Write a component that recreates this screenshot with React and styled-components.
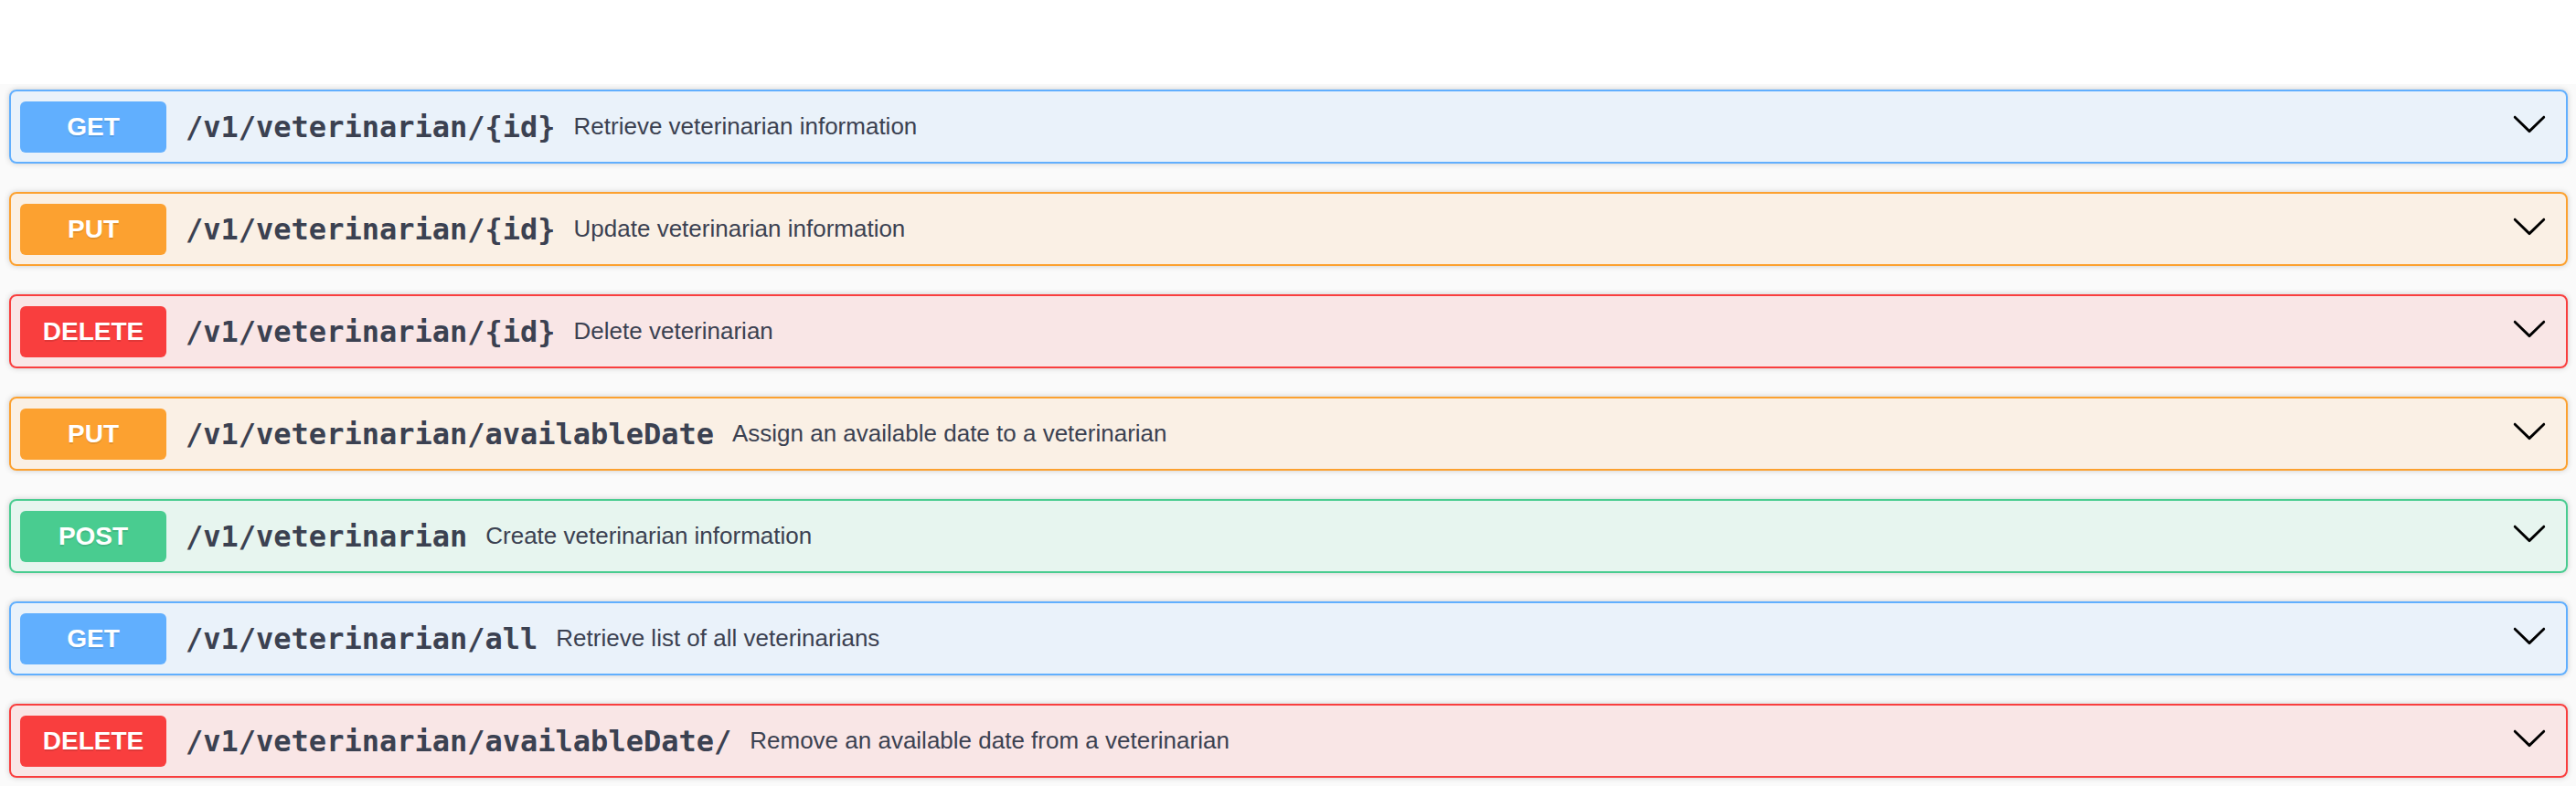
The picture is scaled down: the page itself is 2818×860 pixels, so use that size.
import React from "react";
import styled, { createGlobalStyle } from "styled-components";

const GlobalStyle = createGlobalStyle`
  html, body { margin: 0; padding: 0; }
  body {
    background: #fafafa;
    font-family: "Liberation Sans", Arial, sans-serif;
    color: #3b4151;
  }
`;

const METHODS = {
  GET: { color: "#61affe", bg: "rgba(97,175,254,.1)" },
  PUT: { color: "#fca130", bg: "rgba(252,161,48,.1)" },
  DELETE: { color: "#f93e3e", bg: "rgba(249,62,62,.1)" },
  POST: { color: "#49cc90", bg: "rgba(73,204,144,.1)" },
};

const Page = styled.div`
  min-height: 860px;
  background: #fafafa;
`;

const TopBar = styled.div`
  height: 92px;
  background: #ffffff;
`;

const List = styled.div`
  display: flex;
  flex-direction: column;
  gap: 31px;
  padding: 6px 9px 0 10px;
`;

const Block = styled.div`
  display: flex;
  align-items: center;
  box-sizing: border-box;
  height: 81px;
  padding: 0 20px 0 10px;
  border: 2px solid ${(p) => METHODS[p.$method].color};
  border-radius: 8px;
  background: ${(p) => METHODS[p.$method].bg};
  box-shadow: 0 0 6px rgba(0, 0, 0, 0.19);
`;

const Badge = styled.span`
  flex: 0 0 auto;
  display: flex;
  align-items: center;
  justify-content: center;
  width: 160px;
  height: 56px;
  border-radius: 6px;
  background: ${(p) => METHODS[p.$method].color};
  color: #fff;
  font-family: "Liberation Sans", Arial, sans-serif;
  font-weight: 700;
  font-size: 28px;
  text-shadow: 0 2px 0 rgba(0, 0, 0, 0.1);
`;

const Path = styled.span`
  flex: 0 0 auto;
  padding: 0 20px 0 21px;
  font-family: "DejaVu Sans Mono", monospace;
  font-weight: 700;
  font-size: 32px;
  color: #3b4151;
  line-height: 1;
`;

const Desc = styled.span`
  flex: 1 1 auto;
  font-family: "Liberation Sans", Arial, sans-serif;
  font-size: 26px;
  color: #3b4151;
`;

const Arrow = styled.svg`
  flex: 0 0 auto;
  width: 40px;
  height: 40px;
  margin-bottom: 8px;
  fill: #000;
`;

const ops = [
  ["GET", "/v1/veterinarian/{id}", "Retrieve veterinarian information"],
  ["PUT", "/v1/veterinarian/{id}", "Update veterinarian information"],
  ["DELETE", "/v1/veterinarian/{id}", "Delete veterinarian"],
  ["PUT", "/v1/veterinarian/availableDate", "Assign an available date to a veterinarian"],
  ["POST", "/v1/veterinarian", "Create veterinarian information"],
  ["GET", "/v1/veterinarian/all", "Retrieve list of all veterinarians"],
  ["DELETE", "/v1/veterinarian/availableDate/", "Remove an available date from a veterinarian"],
];

export default function App() {
  return (
    <Page>
      <GlobalStyle />
      <TopBar />
      <List>
        {ops.map(([m, path, desc], i) => (
          <Block key={i} $method={m}>
            <Badge $method={m}>{m}</Badge>
            <Path>{path}</Path>
            <Desc>{desc}</Desc>
            <Arrow viewBox="0 0 20 20" aria-hidden="true">
              <path d="M17.418 6.109c.272-.268.709-.268.979 0s.271.701 0 .969l-7.908 7.83c-.27.268-.707.268-.979 0l-7.908-7.83c-.27-.268-.27-.701 0-.969.271-.268.709-.268.979 0L10 13.25l7.418-7.141z" />
            </Arrow>
          </Block>
        ))}
      </List>
    </Page>
  );
}
